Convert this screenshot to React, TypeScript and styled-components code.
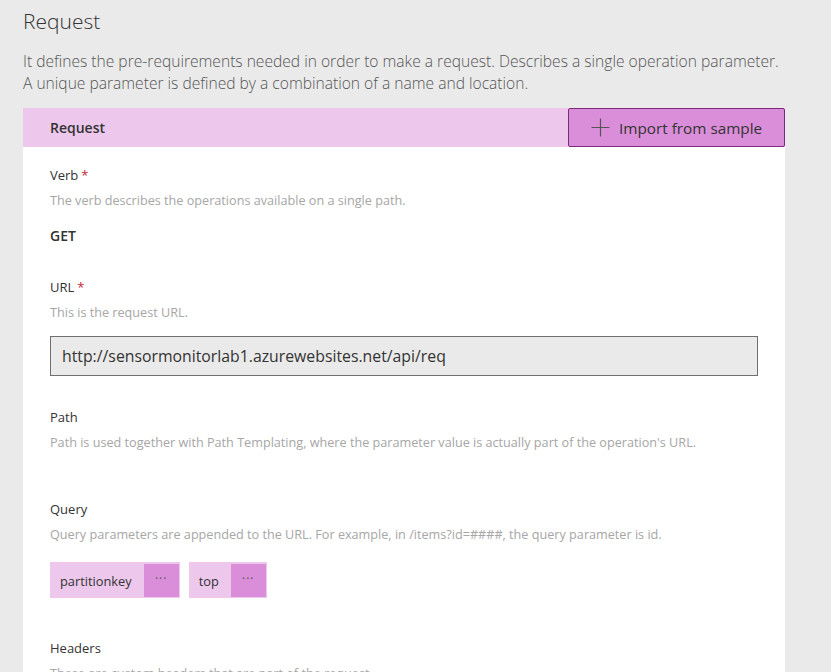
import React from "react";
import styled, { createGlobalStyle } from "styled-components";

const Global = createGlobalStyle`
  html, body { margin: 0; padding: 0; background: #eaeaea; }
  body { font-family: "Open Sans", "Noto Sans", sans-serif; color: #333; }
  * { box-sizing: border-box; }
`;

const Page = styled.div`
  width: 831px;
  height: 672px;
  overflow: hidden;
  padding: 5px 46px 0 23px;
  background: #eaeaea;
`;

const Title = styled.h1`
  margin: 0;
  font-size: 21px;
  font-weight: 300;
  line-height: 32px;
  color: #333;
`;

const Intro = styled.p`
  margin: 13px 0 14px;
  font-size: 15.6px;
  font-weight: 300;
  line-height: 22px;
  color: #555;
  white-space: nowrap;
`;

const Panel = styled.section`
  background: #fff;
`;

const PanelHeader = styled.div`
  display: flex;
  align-items: stretch;
  justify-content: space-between;
  height: 39px;
  background: #edc8ec;
`;

const PanelTitle = styled.h2`
  margin: 0;
  padding-left: 27px;
  display: flex;
  align-items: center;
  font-size: 14px;
  font-weight: 600;
  color: #333;
`;

const ImportButton = styled.button`
  display: flex;
  align-items: center;
  gap: 9px;
  width: 217px;
  padding: 0 0 0 22px;
  background: #da8ed9;
  border: 1px solid #7d2a7b;
  border-radius: 2px;
  font-family: inherit;
  font-size: 15.3px;
  color: #333;
  cursor: pointer;
`;

const Body = styled.div`
  padding: 18px 27px 0;
`;

const Field = styled.div<{ $after?: number }>`
  padding-bottom: ${(p) => p.$after ?? 31}px;
`;

const Label = styled.div`
  font-size: 13px;
  line-height: 20px;
  color: #333;
`;

const Required = styled.span`
  color: #c4262e;
  margin-left: 3px;
`;

const Hint = styled.div`
  margin-top: 6px;
  font-size: 12.65px;
  line-height: 18px;
  color: #a6a6a6;
  white-space: nowrap;
`;

const Content = styled.div<{ $top: number }>`
  margin-top: ${(p) => p.$top}px;
`;

const Value = styled.div`
  font-size: 14px;
  font-weight: 600;
  line-height: 20px;
  color: #333;
`;

const UrlBox = styled.div`
  height: 40px;
  width: 708px;
  display: flex;
  align-items: center;
  padding: 0 11px;
  background: #eaeaea;
  border: 1px solid #6f6f6f;
  font-size: 15.8px;
  color: #333;
`;

const ChipRow = styled.div`
  display: flex;
  gap: 9px;
`;

const Chip = styled.div`
  display: flex;
  align-items: stretch;
  height: 36px;
  padding: 2px 1px 1px 0;
  background: #edc8ec;
`;

const ChipLabel = styled.span`
  display: flex;
  align-items: center;
  padding: 0 12px 0 10px;
  font-size: 12.8px;
  color: #333;
`;

const ChipMore = styled.span`
  width: 35px;
  display: flex;
  align-items: center;
  justify-content: center;
  background: #da8ed9;
  color: #555;
  font-size: 12px;
  letter-spacing: 1px;
  padding-bottom: 4px;
`;

const PlusIcon = () => (
  <svg width="19" height="19" viewBox="0 0 19 19" fill="none">
    <path d="M9.5 0.5v18M0.5 9.5h18" stroke="#555" strokeWidth="1.2" />
  </svg>
);

export default function App() {
  return (
    <>
      <Global />
      <Page>
        <Title>Request</Title>
        <Intro>
          It defines the pre-requirements needed in order to make a request. Describes a single operation parameter.
          <br />
          A unique parameter is defined by a combination of a name and location.
        </Intro>
        <Panel>
          <PanelHeader>
            <PanelTitle>Request</PanelTitle>
            <ImportButton>
              <PlusIcon />
              Import from sample
            </ImportButton>
          </PanelHeader>
          <Body>
            <Field>
              <Label>
                Verb<Required>*</Required>
              </Label>
              <Hint>The verb describes the operations available on a single path.</Hint>
              <Content $top={17}>
                <Value>GET</Value>
              </Content>
            </Field>
            <Field>
              <Label>
                URL<Required>*</Required>
              </Label>
              <Hint>This is the request URL.</Hint>
              <Content $top={15}>
                <UrlBox>http://sensormonitorlab1.azurewebsites.net/api/req</UrlBox>
              </Content>
            </Field>
            <Field>
              <Label>Path</Label>
              <Hint>Path is used together with Path Templating, where the parameter value is actually part of the operation's URL.</Hint>
              <Content $top={17} />
            </Field>
            <Field $after={40}>
              <Label>Query</Label>
              <Hint>Query parameters are appended to the URL. For example, in /items?id=####, the query parameter is id.</Hint>
              <Content $top={19}>
                <ChipRow>
                  <Chip>
                    <ChipLabel>partitionkey</ChipLabel>
                    <ChipMore>···</ChipMore>
                  </Chip>
                  <Chip>
                    <ChipLabel>top</ChipLabel>
                    <ChipMore>···</ChipMore>
                  </Chip>
                </ChipRow>
              </Content>
            </Field>
            <Field>
              <Label>Headers</Label>
              <Hint>These are custom headers that are part of the request.</Hint>
            </Field>
          </Body>
        </Panel>
      </Page>
    </>
  );
}
